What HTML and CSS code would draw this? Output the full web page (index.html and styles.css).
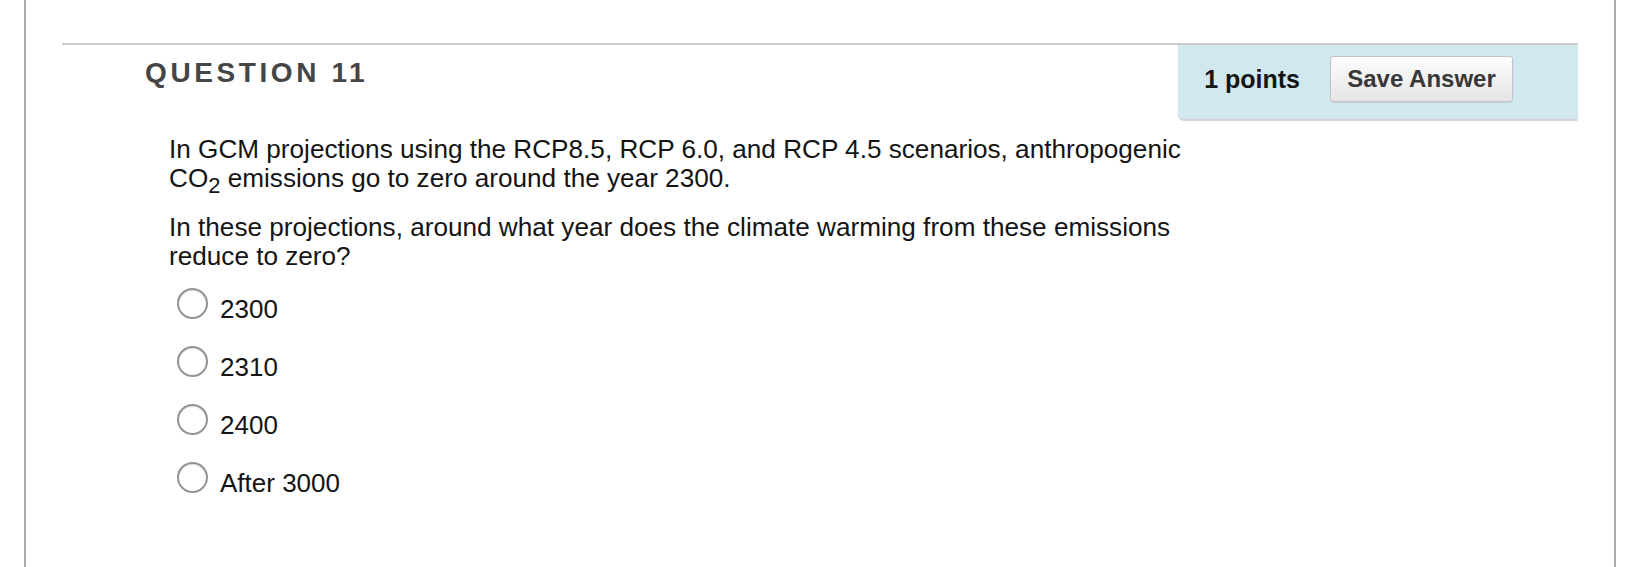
FILE: index.html
```html
<!DOCTYPE html>
<html lang="en">
<head>
<meta charset="utf-8">
<title>Question 11</title>
<link rel="stylesheet" href="styles.css">
</head>
<body>
<div class="panel">
  <div class="question">
    <div class="q-header">
      <h2 class="q-title">QUESTION 11</h2>
      <div class="q-points">
        <span class="points">1 points</span>
        <button class="save-btn" type="button">Save Answer</button>
      </div>
    </div>
    <div class="q-body">
      <p class="q-text">In GCM projections using the RCP8.5, RCP 6.0, and RCP 4.5 scenarios, anthropogenic CO<sub class="sub">2</sub> emissions go to zero around the year 2300.</p>
      <p class="q-text">In these projections, around what year does the climate warming from these emissions reduce to zero?</p>
      <ul class="options">
        <li class="option"><span class="radio"></span><span class="opt-label">2300</span></li>
        <li class="option"><span class="radio"></span><span class="opt-label">2310</span></li>
        <li class="option"><span class="radio"></span><span class="opt-label">2400</span></li>
        <li class="option"><span class="radio"></span><span class="opt-label">After 3000</span></li>
      </ul>
    </div>
  </div>
</div>
</body>
</html>
```
FILE: styles.css
```css
html, body {
  margin: 0;
  padding: 0;
  background: #ffffff;
  height: 100%;
}
body {
  font-family: "Liberation Sans", Arial, Helvetica, sans-serif;
  color: #111111;
  overflow: hidden;
}
.panel {
  box-sizing: border-box;
  margin-left: 24px;
  width: 1592px;
  min-height: 567px;
  border-left: 2px solid #a9a9a9;
  border-right: 2px solid #a9a9a9;
  background: #ffffff;
  padding-top: 43px;
}
.question {
  margin: 0 36px;
  border-top: 2px solid #cbcbcb;
}
.q-header {
  display: flex;
  justify-content: space-between;
  align-items: flex-start;
}
.q-title {
  margin: 12px 0 0 83px;
  font-size: 28px;
  line-height: 32px;
  font-weight: bold;
  letter-spacing: 3.6px;
  color: #454545;
}
.q-points {
  display: flex;
  align-items: center;
  background: #d0e8ee;
  padding: 11px 65px 17px 26px;
  border-bottom-left-radius: 6px;
  box-shadow: 0 2px 1px rgba(0, 0, 0, 0.18);
}
.points {
  font-size: 25px;
  font-weight: bold;
  color: #151515;
  margin-right: 30px;
}
.save-btn {
  font-family: "Liberation Sans", Arial, Helvetica, sans-serif;
  font-size: 24px;
  font-weight: bold;
  color: #383838;
  height: 46px;
  width: 183px;
  padding: 0;
  border: 1px solid #c4c4c4;
  border-radius: 3px;
  background: linear-gradient(#fdfdfd, #e5e5e5);
  box-shadow: 0 1px 1px rgba(0, 0, 0, 0.08);
}
.q-body {
  padding: 16px 0 0 107px;
}
.q-text {
  margin: 0 0 20px;
  max-width: 1040px;
  font-size: 26.15px;
  line-height: 29px;
  color: #141414;
}
.q-text:last-of-type {
  margin-bottom: 17px;
}
.sub {
  font-size: 22px;
  line-height: 0;
  vertical-align: -6px;
}
.options {
  list-style: none;
  margin: 0;
  padding: 0 0 0 8px;
  display: flex;
  flex-direction: column;
  gap: 22px;
}
.option {
  display: flex;
  align-items: flex-start;
  gap: 12px;
}
.radio {
  box-sizing: border-box;
  width: 31px;
  height: 31px;
  border-radius: 50%;
  border: 2px solid #939393;
  background: #ffffff;
  box-shadow: inset 0 1px 1px rgba(0, 0, 0, 0.12);
  flex: none;
}
.opt-label {
  margin-top: 7px;
  font-size: 26px;
  line-height: 29px;
  color: #141414;
}
```
